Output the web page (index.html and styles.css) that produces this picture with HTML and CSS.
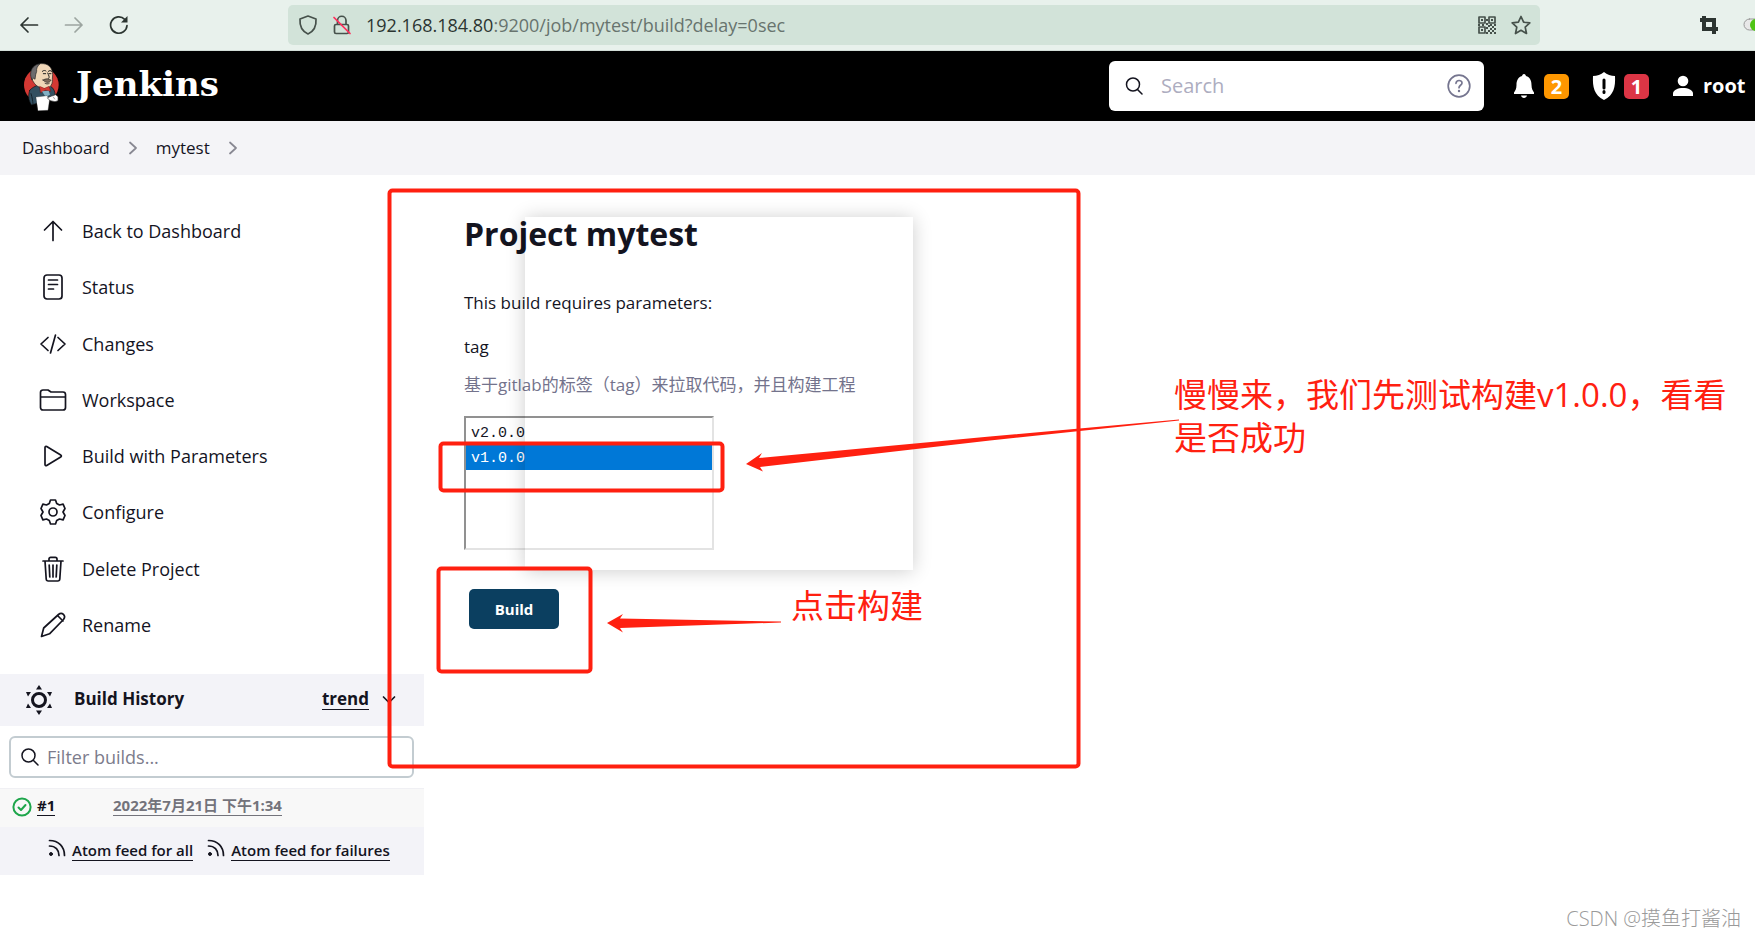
FILE: index.html
```html
<!DOCTYPE html>
<html lang="en">
<head>
<meta charset="utf-8">
<title>mytest [Jenkins]</title>
<link rel="stylesheet" href="styles.css">
</head>
<body>
<div class="toolbar">
  <div class="nav-buttons">
    <button class="icon-button" aria-label="Back"><svg width="20" height="20" viewBox="0 0 20 20"><path d="M18.500 10H2M9 3L2 10l7 7"/></svg></button>
    <button class="icon-button is-disabled" aria-label="Forward"><svg width="20" height="20" viewBox="0 0 20 20"><path d="M1.500 10H18M11 3l7 7-7 7"/></svg></button>
    <button class="icon-button" aria-label="Reload"><svg width="20" height="20" viewBox="0 0 20 20"><path d="M18 10.500a8.200 8.200 0 1 1-2.300-6.200"/><path class="solid" d="M18.500 1v6.500H12z"/></svg></button>
  </div>
  <div class="address">
    <svg width="20" height="20" viewBox="0 0 20 20"><path d="M10 1l8 3c.500 7-1.500 12-8 15C3.500 16 1.500 11 2 4z"/></svg>
    <svg width="20" height="20" viewBox="0 0 20 20"><path d="M4 9.500h11c1 0 1.500.600 1.500 1.500v6c0 1-.500 1.500-1.500 1.500H4c-1 0-1.500-.500-1.500-1.500v-6c0-1 .500-1.500 1.500-1.500zM5.500 9V5.500a4 4 0 0 1 8.500 0V9"/><path class="strike" d="M2 2.500l16 16"/></svg>
    <span class="url"><span class="url-host">192.168.184.80</span>:9200/job/mytest/build?delay=0sec</span>
    <svg width="20" height="20" viewBox="0 0 20 20"><path d="M2 2h6v6H2zM12 2h6v6h-6zM2 12h6v6H2z"/><path class="solid" d="M4 4h2v2H4zM14 4h2v2h-2zM4 14h2v2H4zM9 4h2v2H9zM1 9h2v2H1zM5 9h2v2H5zM9 8h2v2H9zM13 9h2v2h-2zM17 9h2v2h-2zM11 10h2v2h-2zM15 11h2v2h-2zM9 12h2v2H9zM13 13h2v2h-2zM17 13h2v2h-2zM11 15h2v2h-2zM15 15h2v2h-2zM9 17h2v2H9zM13 17h2v2h-2zM17 17h2v2h-2z"/></svg>
    <svg width="20" height="20" viewBox="0 0 20 20"><path d="M10 1.500l2.600 5.700 6.200.700-4.600 4.200 1.300 6.400-5.500-3.200-5.500 3.200 1.300-6.400L1.200 7.900l6.200-.700z"/></svg>
  </div>
  <div class="extensions">
    <svg width="20" height="20" viewBox="0 0 20 20"><path class="crop" d="M5 1v13h14M1 5h14v14"/></svg>
    <svg width="14" height="20" viewBox="0 0 14 20"><rect x="3" y="4" width="20" height="11" rx="5.500" fill="#e8e8e8" stroke="#999" stroke-width="1"/><circle cx="15" cy="10" r="6" fill="#4fc414" stroke="none"/></svg>
  </div>
</div>

<header class="header">
  <a class="brand" href="#">
    <svg class="mascot" width="50" height="60" viewBox="0 3 150 180" aria-hidden="true">
      <circle cx="79" cy="90" r="52" fill="#d33833"/>
      <path d="M44 106c6-8 18-13 30-18l32 6c10 4 14 16 15 28l-16 6-8 8-48 14-4-8c-6-12-4-26-1-36z" fill="#335061" stroke="#111" stroke-width="2"/>
      <path d="M48 116c4 12 5 22 6 30" stroke="#15222b" stroke-width="3" fill="none"/>
      <path d="M50 70c-4-24 4-40 26-44 24-2 36 12 37 32l-1 16c2 18-12 28-26 27-18-3-30-14-36-31z" fill="#f0d6b7" stroke="#222" stroke-width="2"/>
      <path d="M51 74c-7-12-5-28 4-38 6-6 12-9 19-9-8 8-10 14-9 22l-3 10-2 14c-4-5-7-4-9 1z" fill="#6d6b6d" stroke="#222" stroke-width="2"/>
      <path d="M82 49c4-4 9-3 11-1M100 49c3-3 7-3 10 0M85 56h7M102 56h6M98 54c3 8 7 12 3 16" fill="none" stroke="#222" stroke-width="3"/>
      <path d="M84 75c8-5 18-5 24 1-4 7-14 10-24-1zM90 85c5 3 9 3 13 0" fill="#806b5c" stroke="#222" stroke-width="2"/>
      <path d="M74 94l14 6 14-6 5 15-16-3-14 7z" fill="#d33833" stroke="#600" stroke-width="1"/>
      <path d="M81 109l20-2 4 12-13 7z" fill="#81b0c4"/>
      <path d="M63 126l33-4 8 10-5 34-30 1z" fill="#fff" stroke="#333" stroke-width="1"/>
      <path d="M98 128l12-5 12-4 7 6v12l-9 3-14-3z" fill="#fff" stroke="#333" stroke-width="2"/>
      <path d="M115 126l4 6" stroke="#777" stroke-width="2"/>
    </svg>
    <span class="brand-name">Jenkins</span>
  </a>
  <div class="search">
    <svg width="18" height="20" viewBox="0 0 18 20"><circle cx="8" cy="8.500" r="6.500"/><path d="M12.500 13.500l4.500 4.500"/></svg>
    <input class="search-input" type="text" placeholder="Search" aria-label="Search">
    <a class="help" href="#" aria-label="Search help"><svg width="24" height="24" viewBox="0 0 24 24"><circle cx="12" cy="12" r="10.800"/><path d="M9 9.300c.300-3.800 6-3.600 6-.300 0 2.300-3 2.300-3 4.700"/><circle class="dot" cx="12" cy="17" r="1.200"/></svg></a>
  </div>
  <div class="account">
    <a class="alert" href="#" aria-label="Notifications"><svg width="24" height="28" viewBox="0 0 24 28"><path d="M12 2c1.300 0 1.800 1 1.900 2 4.300 1 5.600 5 5.600 9 0 4 1.500 6 2.500 7.500V22H2v-1.500C3 19 4.500 17 4.500 13c0-4 1.300-8 5.600-9C10.200 3 10.700 2 12 2zM9 23.500h6c-.500 3.300-5.500 3.300-6 0z"/></svg><span class="badge is-warning">2</span></a>
    <a class="alert" href="#" aria-label="Security warnings"><svg width="24" height="28" viewBox="0 0 24 28"><path d="M12 0c3 2.500 7 4 11 4 .500 11-1 19-11 24C2 23 .500 15 1 4 5 4 9 2.500 12 0z"/><path class="mark" d="M12 8v8M12 19.500v1"/></svg><span class="badge is-danger">1</span></a>
    <a class="alert user" href="#"><svg width="22" height="28" viewBox="0 0 22 28"><circle cx="11" cy="9" r="5.300"/><path d="M1 24v-2.500c0-7.500 20-7.500 20 0V24z"/></svg>root<svg class="caret" width="14" height="8" viewBox="0 0 14 8"><path d="M1 1l6 6 6-6"/></svg></a>
  </div>
</header>

<nav class="breadcrumbs" aria-label="Breadcrumb">
  <a href="#">Dashboard</a>
  <svg width="8" height="14" viewBox="0 0 8 14"><path d="M1 1.500L7 7l-6 5.500"/></svg>
  <a href="#">mytest</a>
  <svg width="8" height="14" viewBox="0 0 8 14"><path d="M1 1.500L7 7l-6 5.500"/></svg>
</nav>

<div class="page">
  <aside class="sidebar">
    <nav class="tasks" aria-label="Tasks">
      <a class="task" href="#"><svg width="28" height="28" viewBox="0 0 28 28"><path d="M14 23.500V5M5.500 13L14 4.500l8.500 8.500"/></svg>Back to Dashboard</a>
      <a class="task" href="#"><svg width="28" height="28" viewBox="0 0 28 28"><rect x="5" y="2" width="18" height="24" rx="3"/><path d="M9.500 7h9M9.500 11.500h9M9.500 16h5"/></svg>Status</a>
      <a class="task" href="#"><svg width="28" height="28" viewBox="0 0 28 28"><path d="M9 7.500L2 14l7 6.500M19 7.500l7 6.500-7 6.500M16.500 5l-5 18"/></svg>Changes</a>
      <a class="task" href="#"><svg width="28" height="28" viewBox="0 0 28 28"><path d="M1.500 21.500v-15c0-1.500 1-2.500 2.500-2.500h5l3 2h12c1.500 0 2.500 1 2.500 2.500v13c0 1.500-1 2.500-2.500 2.500H4c-1.500 0-2.500-1-2.500-2.500zM1.500 11h25"/></svg>Workspace</a>
      <a class="task" href="#"><svg width="28" height="28" viewBox="0 0 28 28"><path d="M6 5.500v17c0 1 .800 1.500 1.700 1l14-8.500c.900-.500.900-1.500 0-2l-14-8.500c-.900-.500-1.700 0-1.700 1z"/></svg>Build with Parameters</a>
      <a class="task" href="#"><svg width="28" height="28" viewBox="0 0 28 28"><circle cx="14" cy="14" r="4"/><path d="M11.500 2h5l1.200 3.500 2.800 1.500 3.600-.800L26 10.500 24 14l2 3.500-1.900 4.300-3.600-.800-2.800 1.500-1.200 3.500h-5l-1.200-3.500L7.500 21l-3.600.800L2 17.500 4 14l-2-3.500 1.900-4.300 3.600.800 2.800-1.500z"/></svg>Configure</a>
      <a class="task" href="#"><svg width="28" height="28" viewBox="0 0 28 28"><path d="M4 6h20M6 6l1.200 18c.100 1.200.800 2 2 2h9.600c1.200 0 1.900-.800 2-2L22 6M10 6V4c0-1 .700-1.700 1.700-1.700h4.600c1 0 1.700.700 1.700 1.700v2M10.200 10l.600 12M14 10v12M17.800 10l-.600 12"/></svg>Delete Project</a>
      <a class="task" href="#"><svg width="28" height="28" viewBox="0 0 28 28"><path d="M2.500 25.500l2.200-8.500L19.500 3.500c3.500-3 8 1.200 5 5L10.500 22.800zM18.500 4.500l5.500 5.500"/></svg>Rename</a>
    </nav>
    <section class="history">
      <div class="history-head">
        <svg width="28" height="32" viewBox="0 0 28 32"><circle class="ring" cx="14" cy="16" r="6.500"/><path class="solid" d="M14 1l3 4.500h-6zM14 31l3-4.500h-6zM1 8h5l-3 4.500zM27 8h-5l3 4.500zM1 24h5l-3-4.500zM27 24h-5l3-4.500z"/></svg>
        <h2>Build History</h2>
        <a class="underlined" href="#">trend</a>
        <svg width="14" height="10" viewBox="0 0 14 10"><path d="M1.500 2L7 7.500 12.500 2"/></svg>
      </div>
      <div class="filter">
        <svg width="18" height="18" viewBox="0 0 18 18"><circle cx="7.500" cy="7.500" r="6.500"/><path d="M12.500 12.500l4.500 4.500"/></svg>
        <input type="text" placeholder="Filter builds..." aria-label="Filter builds">
      </div>
      <div class="build-row">
        <svg width="20" height="20" viewBox="0 0 20 20"><circle cx="10" cy="10" r="8.600"/><path d="M6.500 10.500L9 13l4.500-5"/></svg>
        <a class="underlined build-number" href="#">#1</a>
        <a class="underlined build-date" href="#">2022年7月21日 下午1:34</a>
      </div>
      <div class="feeds">
        <a class="feed" href="#"><svg width="18" height="18" viewBox="0 0 18 18"><path d="M1.500 1.500c9 0 15 6 15 15M1.500 7c6 0 9.500 4 9.500 9.500"/><circle cx="3" cy="15" r="1.500"/></svg><span class="underlined">Atom feed for all</span></a>
        <a class="feed" href="#"><svg width="18" height="18" viewBox="0 0 18 18"><path d="M1.500 1.500c9 0 15 6 15 15M1.500 7c6 0 9.500 4 9.500 9.500"/><circle cx="3" cy="15" r="1.500"/></svg><span class="underlined">Atom feed for failures</span></a>
      </div>
    </section>
  </aside>

  <main class="content">
    <h1>Project mytest</h1>
    <form class="parameters">
      <p class="lead">This build requires parameters:</p>
      <label class="name" for="tag">tag</label>
      <p class="description">基于gitlab的标签（tag）来拉取代码，并且构建工程</p>
      <select id="tag" class="tag-list" size="5">
        <option>v2.0.0</option>
        <option selected>v1.0.0</option>
      </select>
      <button class="build-button" type="button">Build</button>
    </form>
  </main>

  <div class="ghost"></div>
  <svg class="marks" width="1200" height="610" viewBox="0 175 1200 610" aria-hidden="true">
    <rect x="389.500" y="190.500" width="689" height="576" rx="3"/>
    <rect x="440.500" y="443.500" width="282" height="47" rx="3"/>
    <rect x="438.500" y="568.500" width="152" height="103" rx="3"/>
    <path d="M746 464l16-11-3 5 231-21.500 189-17v1l-189 20-230 26.500 3 4.500z"/>
    <path d="M607 623l16-9-3 4.500 161 3v1l-161 5.500 3 4.500z"/>
  </svg>
  <p class="note note-tag">慢慢来，我们先测试构建v1.0.0，看看是否成功</p>
  <p class="note note-build">点击构建</p>
</div>
<div class="watermark">CSDN @摸鱼打酱油</div>
</body>
</html>
```
FILE: styles.css
```css
* { box-sizing: border-box; }
body {
  margin: 0;
  min-height: 100vh;
  overflow: hidden;
  position: relative;
  background: #fff;
  color: #14141f;
  font: 17px/24px "Open Sans", "Noto Sans CJK SC", sans-serif;
}
a { color: inherit; text-decoration: none; }
h1, h2, p { margin: 0; }
svg { flex: none; fill: none; stroke: currentColor; stroke-width: 1.7; stroke-linecap: round; stroke-linejoin: round; }
input, button, select { font: inherit; color: inherit; }

.toolbar {
  display: flex;
  align-items: center;
  height: 51px;
  background: #e8f1ec;
  border-bottom: 1px solid #d2ddd7;
  color: #2c3531;
}
.nav-buttons { display: flex; gap: 25px; padding-left: 19px; width: 288px; }
.icon-button { display: flex; padding: 0; border: 0; background: none; }
.is-disabled { opacity: .4; }
.toolbar svg .solid, .toolbar svg.solid { fill: currentColor; stroke: none; }
.toolbar .strike { stroke: #ff2d5a; }
.address {
  flex: 1;
  display: flex;
  align-items: center;
  gap: 14px;
  height: 40px;
  padding: 0 9px 0 10px;
  border-radius: 5px;
  background: #d2e3d9;
  color: #46514b;
}
.url { flex: 1; color: #68746e; font-size: 18px; }
.url-host { color: #2c3531; }
.extensions { display: flex; justify-content: space-between; width: 215px; padding-left: 159px; }
.toolbar .crop { stroke-width: 4; stroke-linecap: butt; stroke-linejoin: miter; }

.header {
  display: flex;
  align-items: center;
  height: 70px;
  padding-left: 15px;
  overflow: hidden;
  background: #000;
  color: #fff;
}
.brand { display: flex; align-items: center; gap: 11px; }
.mascot { stroke: none; }
.brand-name { padding-bottom: 4px; font: bold 34px/40px "DejaVu Serif", serif; }
.search {
  display: flex;
  align-items: center;
  gap: 18px;
  width: 375px;
  height: 50px;
  margin-left: auto;
  padding: 0 13px 0 16px;
  border-radius: 6px;
  background: #fff;
  color: #14141f;
}
.search > svg, .filter > svg { stroke-width: 1.5; }
.search-input { flex: 1; min-width: 0; padding: 0; border: 0; outline: 0; background: none; font-size: 20px; }
.search-input::placeholder { color: #adadbf; opacity: 1; }
.help { display: flex; color: #75758f; }
.help .dot { fill: currentColor; stroke: none; }
.account { display: flex; gap: 23px; width: 271px; padding-left: 28px; }
.alert { display: flex; align-items: center; gap: 8px; flex: none; }
.alert svg { fill: currentColor; stroke: none; }
.alert .mark { stroke: #000; stroke-width: 3; }
.alert .caret { fill: none; stroke: currentColor; stroke-width: 2; }
.badge { width: 25px; height: 25px; border-radius: 5px; font-weight: 700; font-size: 20px; line-height: 25px; text-align: center; }
.is-warning { background: #fe9700; }
.is-danger { background: #dc3545; }
.user { gap: 9px; font-weight: 700; font-size: 20px; }

.breadcrumbs {
  display: flex;
  align-items: center;
  gap: 19px;
  height: 54px;
  padding-left: 22px;
  background: #f4f4f7;
}
.breadcrumbs svg { color: #888892; }

.page { position: relative; display: flex; }
.sidebar { flex: none; width: 424px; padding-top: 28px; }
.tasks { display: grid; grid-template-rows: repeat(8, 1fr); height: 450px; padding-left: 39px; font-size: 18px; }
.task { display: flex; align-items: center; gap: 15px; }
.history { display: flex; flex-direction: column; padding-top: 21px; }
.history-head { display: flex; align-items: center; height: 52px; padding: 0 28px 0 25px; background: #f3f3f8; }
.history-head h2 { flex: 1; padding: 0 0 2px 21px; font-size: 17px; font-weight: 700; line-height: 24px; }
.history-head > a { margin: 0 13px 2px 0; font-weight: 700; }
.ring { stroke-width: 3; }
.history-head .solid { fill: currentColor; stroke: none; }
.underlined { border-bottom: 1px solid currentColor; line-height: 20px; }
.filter {
  display: flex;
  align-items: center;
  gap: 8px;
  height: 42px;
  margin: 10px 10px 10px 9px;
  padding: 0 10px;
  border: 2px solid #c3ccd1;
  border-radius: 6px;
}
.filter input { flex: 1; min-width: 0; padding: 0; border: 0; outline: 0; background: none; font-size: 18px; }
.filter input::placeholder { color: #7c7c8c; opacity: 1; }
.build-row { display: flex; align-items: center; height: 39px; padding: 0 0 2px 12px; background: #f8f8f8; border-top: 1px solid #f0f0f4; }
.build-row svg { color: #1ea64b; stroke-width: 2; }
.build-row .underlined { margin-bottom: 4px; font-size: 15px; font-weight: 700; }
.build-number { margin: 0 58px 0 5px; width: 18px; }
.build-date { color: #73737b; }
.feeds { display: flex; gap: 14px; height: 48px; padding: 12px 0 0 48px; background: #f3f3f8; font-size: 15px; font-weight: 600; }
.feed { display: flex; gap: 6px; }
.feed .underlined { height: 22px; line-height: 22px; }
.feed circle { fill: currentColor; stroke-width: 1; }

.content { flex: 1; padding: 39px 40px; }
.content h1 { font-size: 32px; line-height: 40px; font-weight: 700; }
.parameters { display: flex; flex-direction: column; align-items: flex-start; }
.lead { margin-top: 37px; }
.name { margin-top: 20px; }
.description { margin-top: 14px; color: #73738c; }
.tag-list {
  width: 250px;
  height: 134px;
  margin: 19px 0 39px;
  padding: 2px 0;
  appearance: none;
  overflow: hidden;
  outline: 0;
  border: 2px solid;
  border-color: #919191 #e3e3e3 #e3e3e3 #919191;
  border-radius: 0;
  background: none;
}
.tag-list option { height: 25px; min-height: 25px; padding: 5px 5px 0; font: 15px/17px "Liberation Mono", monospace; }
.tag-list option:checked { background-image: linear-gradient(#0078d7, #0078d7); -webkit-text-fill-color: #fff; }
.build-button {
  width: 90px;
  height: 40px;
  margin-left: 5px;
  border: 0;
  border-radius: 5px;
  background: #0b3f60;
  color: #fff;
  font-size: 15px;
  font-weight: 700;
}

.ghost {
  position: absolute;
  left: 525px;
  top: 42px;
  width: 388px;
  height: 353px;
  box-shadow: 0 1px 18px rgba(0, 0, 0, .2);
  pointer-events: none;
}
.marks { position: absolute; left: 0; top: 0; pointer-events: none; color: #ff2010; }
.marks rect { stroke-width: 4; }
.marks path { fill: currentColor; stroke: none; }
.note { position: absolute; color: #ff2010; font-size: 33px; line-height: 43px; }
.note-tag { left: 1174px; top: 198px; width: 562px; }
.note-build { left: 791px; top: 409px; }
.watermark { position: absolute; right: 14px; bottom: 6px; color: #9a9a9a; font: 300 20px/26px "Open Sans", "Noto Sans CJK SC", sans-serif; }
```
